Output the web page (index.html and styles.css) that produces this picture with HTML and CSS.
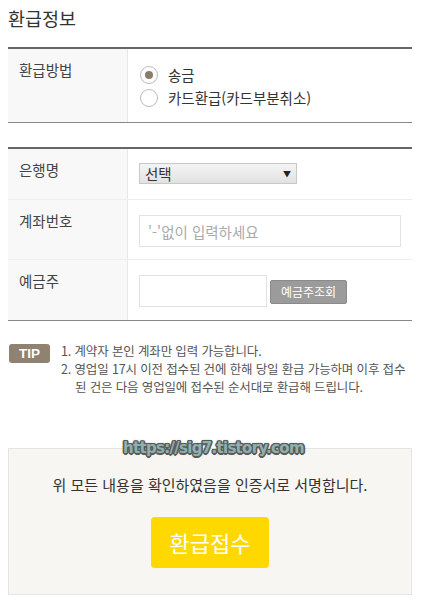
FILE: index.html
```html
<!DOCTYPE html>
<html lang="ko">
<head>
<meta charset="utf-8">
<link rel="stylesheet" href="styles.css">
</head>
<body>
<div class="page">
  <h1 class="title">환급정보</h1>

  <div class="table first">
    <div class="row">
      <div class="label">환급방법</div>
      <div class="cell radios">
        <label class="radio"><span class="dot checked"></span>송금</label>
        <label class="radio"><span class="dot"></span>카드환급(카드부분취소)</label>
      </div>
    </div>
  </div>

  <div class="table second">
    <div class="row r1">
      <div class="label">은행명</div>
      <div class="cell">
        <div class="select"><span>선택</span><span class="arrow">▼</span></div>
      </div>
    </div>
    <div class="row r2">
      <div class="label">계좌번호</div>
      <div class="cell">
        <div class="input wide">'-'없이 입력하세요</div>
      </div>
    </div>
    <div class="row r3">
      <div class="label">예금주</div>
      <div class="cell owner">
        <div class="input short"></div>
        <div class="btn-gray">예금주조회</div>
      </div>
    </div>
  </div>

  <div class="tip">
    <div class="badge">TIP</div>
    <ol class="tip-list">
      <li>1. 계약자 본인 계좌만 입력 가능합니다.</li>
      <li>2. 영업일 17시 이전 접수된 건에 한해 당일 환급 가능하며 이후 접수<br><span class="indent">된 건은 다음 영업일에 접수된 순서대로 환급해 드립니다.</span></li>
    </ol>
  </div>

  <div class="confirm">
    <div class="watermark">https://sig7.tistory.com</div>
    <p class="confirm-text">위 모든 내용을 확인하였음을 인증서로 서명합니다.</p>
    <div class="btn-yellow">환급접수</div>
  </div>
</div>
</body>
</html>
```

FILE: styles.css
```css
* { box-sizing: border-box; }
html, body { margin: 0; padding: 0; background: #fff; }
body {
  font-family: "Noto Sans CJK KR", "Noto Sans", sans-serif;
  color: #333;
}
.page { padding: 0 9px 0 8px; }
.title {
  margin: 0;
  padding-top: 5px;
  height: 47px;
  font-size: 18.5px;
  font-weight: 400;
  line-height: 26px;
  color: #333;
}
.table {
  border-top: 2px solid #666;
  border-bottom: 1px solid #888;
}
.table.second { margin-top: 24px; }
.row {
  display: flex;
  border-top: 1px solid #eee;
}
.row:first-child { border-top: none; }
.label {
  width: 120px;
  flex: none;
  background: #f8f8f8;
  border-right: 1px solid #e8e8e8;
  padding: 11px 0 0 11px;
  font-size: 14.5px;
  line-height: 20px;
  color: #444;
}
.cell { flex: 1; padding-left: 11px; }
.first .row { height: 73px; }
.radios { padding-top: 14px; display: flex; flex-direction: column; }
.radio {
  display: flex;
  align-items: center;
  height: 23px;
  font-size: 14.5px;
  color: #333;
}
.dot {
  width: 18px;
  height: 18px;
  border: 1px solid #bbb;
  border-radius: 50%;
  background: #fff;
  margin-right: 10px;
  margin-left: 1px;
  position: relative;
}
.dot.checked::after {
  content: "";
  position: absolute;
  left: 4px; top: 4px;
  width: 8px; height: 8px;
  border-radius: 50%;
  background: #8b7b6b;
}
.r1 { height: 50px; }
.r1 .cell { padding-top: 14px; }
.select {
  width: 158px;
  height: 21px;
  border: 1px solid #c8c8c8;
  background: linear-gradient(#f4f4f4, #e2e2e2);
  display: flex;
  justify-content: space-between;
  align-items: center;
  padding: 0 5px 0 5px;
  font-size: 14.5px;
  color: #333;
}
.arrow { font-size: 8px; color: #222; }
.r2 { height: 60px; }
.r2 .cell { padding-top: 15px; }
.input {
  height: 32px;
  border: 1px solid #e2e2e2;
  background: #fff;
  font-size: 14.5px;
  color: #aaa;
  padding: 5px 0 0 8px;
}
.input.wide { width: 262px; }
.r3 { height: 61px; }
.owner { padding-top: 15px; display: flex; align-items: flex-start; }
.input.short { width: 128px; }
.btn-gray {
  margin-top: 5px;
  margin-left: 3px;
  width: 77px;
  height: 24px;
  background: #9b9b9b;
  border: 1px solid #8a8a8a;
  border-radius: 2px;
  color: #fff;
  font-size: 12px;
  line-height: 22px;
  text-align: center;
}
.tip {
  display: flex;
  margin-top: 21px;
  padding-left: 1px;
}
.badge {
  width: 41px;
  height: 19px;
  background: #8f8270;
  border-radius: 3px;
  color: #fff;
  font-family: "Liberation Sans", "Noto Sans", sans-serif;
  font-weight: 700;
  font-size: 13.5px;
  line-height: 19px;
  text-align: center;
  margin-top: 2px;
  flex: none;
}
.tip-list {
  list-style: none;
  margin: 0 0 0 11px;
  padding: 0;
  font-size: 12.5px;
  line-height: 18px;
  color: #555;
  letter-spacing: -0.15px;
}
.indent { padding-left: 14px; }
.confirm {
  position: relative;
  margin-top: 52px;
  height: 147px;
  background: #f7f6f2;
  border: 1px solid #e4e4e2;
  display: flex;
  flex-direction: column;
  align-items: center;
}
.watermark {
  position: absolute;
  top: -12px;
  left: 114px;
  font-family: "DejaVu Sans", sans-serif;
  font-weight: 700;
  font-size: 15px;
  line-height: 22px;
  color: #8fb0ad;
  letter-spacing: -0.7px;
  text-shadow:
    -1.5px 0 0 #5a5a5a, 1.5px 0 0 #5a5a5a, 0 -1.5px 0 #5a5a5a, 0 1.5px 0 #5a5a5a,
    -1px -1px 0 #5a5a5a, 1px -1px 0 #5a5a5a, -1px 1px 0 #5a5a5a, 1px 1px 0 #5a5a5a,
    0 0 3px #777;
}
.confirm-text {
  margin: 25px 0 0;
  font-size: 15px;
  line-height: 22px;
  color: #333;
}
.btn-yellow {
  margin-top: 21px;
  width: 118px;
  height: 51px;
  background: #ffd800;
  border-radius: 4px;
  color: #fff;
  font-size: 22px;
  line-height: 51px;
  text-align: center;
}
```
